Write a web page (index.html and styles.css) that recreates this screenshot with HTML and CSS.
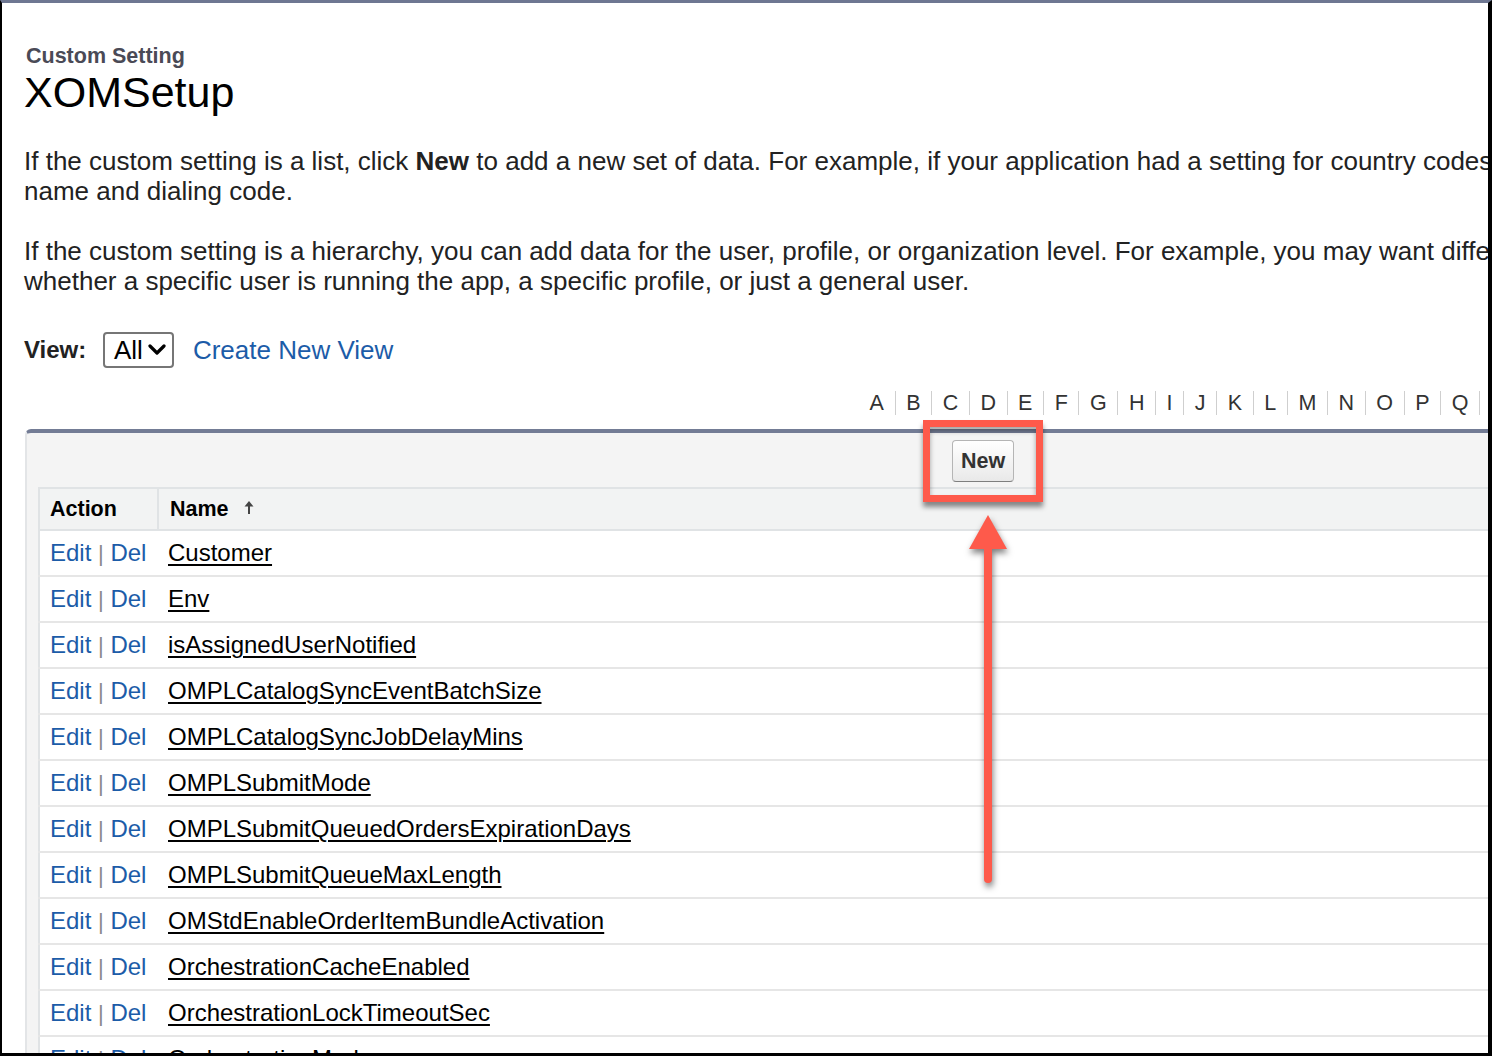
FILE: index.html
```html
<!DOCTYPE html>
<html lang="en">
<head>
    <meta charset="UTF-8">
    <title>XOMSetup ~ Custom Setting</title>
    <link rel="stylesheet" href="styles.css">
</head>
<body>
    <div class="frame">
        <div class="page">
            <div class="page-type">Custom Setting</div>
            <h1 class="page-title">XOMSetup</h1>

            <p class="intro">If the custom setting is a list, click <b>New</b> to add a new set of data. For example, if your application had a setting for country codes, each set might include the country's<br>name and dialing code.</p>
            <p class="intro">If the custom setting is a hierarchy, you can add data for the user, profile, or organization level. For example, you may want different values to display depending on<br>whether a specific user is running the app, a specific profile, or just a general user.</p>

            <div class="view-row">
                <span class="view-label">View:</span>
                <span class="view-select">All
                    <svg width="18" height="12" viewBox="0 0 18 12"><path d="M2 2 L9 9 L16 2" fill="none" stroke="#000" stroke-width="3.2" stroke-linecap="round" stroke-linejoin="round"/></svg>
                </span>
                <a class="link" href="#">Create New View</a>
            </div>

            <div class="alpha">
                <span>A</span><span>B</span><span>C</span><span>D</span><span>E</span><span>F</span><span>G</span><span>H</span><span>I</span><span>J</span><span>K</span><span>L</span><span>M</span><span>N</span><span>O</span><span>P</span><span>Q</span><span>R</span><span>S</span>
            </div>

            <div class="list-block">
                <div class="list-buttons">
                    <button class="btn">New</button>
                </div>
                <table class="list">
                    <tr class="head">
                        <th class="col-action">Action</th>
                        <th>Name <svg class="sort" width="10" height="14" viewBox="0 0 10 14"><path d="M5 13 L5 3" stroke="#444" stroke-width="2"/><path d="M5 0 L9.5 5.5 L0.5 5.5 Z" fill="#444"/></svg></th>
                    </tr>
                    <tr><td class="col-action"><a class="link" href="#">Edit</a> <span class="pipe">|</span> <a class="link" href="#">Del</a></td><td><a class="name" href="#">Customer</a></td></tr>
                    <tr><td class="col-action"><a class="link" href="#">Edit</a> <span class="pipe">|</span> <a class="link" href="#">Del</a></td><td><a class="name" href="#">Env</a></td></tr>
                    <tr><td class="col-action"><a class="link" href="#">Edit</a> <span class="pipe">|</span> <a class="link" href="#">Del</a></td><td><a class="name" href="#">isAssignedUserNotified</a></td></tr>
                    <tr><td class="col-action"><a class="link" href="#">Edit</a> <span class="pipe">|</span> <a class="link" href="#">Del</a></td><td><a class="name" href="#">OMPLCatalogSyncEventBatchSize</a></td></tr>
                    <tr><td class="col-action"><a class="link" href="#">Edit</a> <span class="pipe">|</span> <a class="link" href="#">Del</a></td><td><a class="name" href="#">OMPLCatalogSyncJobDelayMins</a></td></tr>
                    <tr><td class="col-action"><a class="link" href="#">Edit</a> <span class="pipe">|</span> <a class="link" href="#">Del</a></td><td><a class="name" href="#">OMPLSubmitMode</a></td></tr>
                    <tr><td class="col-action"><a class="link" href="#">Edit</a> <span class="pipe">|</span> <a class="link" href="#">Del</a></td><td><a class="name" href="#">OMPLSubmitQueuedOrdersExpirationDays</a></td></tr>
                    <tr><td class="col-action"><a class="link" href="#">Edit</a> <span class="pipe">|</span> <a class="link" href="#">Del</a></td><td><a class="name" href="#">OMPLSubmitQueueMaxLength</a></td></tr>
                    <tr><td class="col-action"><a class="link" href="#">Edit</a> <span class="pipe">|</span> <a class="link" href="#">Del</a></td><td><a class="name" href="#">OMStdEnableOrderItemBundleActivation</a></td></tr>
                    <tr><td class="col-action"><a class="link" href="#">Edit</a> <span class="pipe">|</span> <a class="link" href="#">Del</a></td><td><a class="name" href="#">OrchestrationCacheEnabled</a></td></tr>
                    <tr><td class="col-action"><a class="link" href="#">Edit</a> <span class="pipe">|</span> <a class="link" href="#">Del</a></td><td><a class="name" href="#">OrchestrationLockTimeoutSec</a></td></tr>
                    <tr><td class="col-action"><a class="link" href="#">Edit</a> <span class="pipe">|</span> <a class="link" href="#">Del</a></td><td><a class="name" href="#">OrchestrationMode</a></td></tr>
                </table>
            </div>
        </div>

        <!-- annotation overlay -->
        <div class="callout-box"></div>
        <svg class="callout-arrow" width="60" height="400" viewBox="0 0 60 400">
            <path d="M28 40 L28 374" stroke="#fe5a4b" stroke-width="8" stroke-linecap="round"/>
            <path d="M28 10 L47 44 L9 44 Z" fill="#fe5a4b"/>
        </svg>
    </div>
</body>
</html>
```

FILE: styles.css
```css
body {
    margin: 0;
    font-family: "Liberation Sans", Arial, sans-serif;
    background: #000;
}
.frame {
    position: relative;
    width: 1492px;
    height: 1056px;
    box-sizing: border-box;
    border-top: 3px solid #6e7792;
    border-left: 2px solid #000;
    border-right: 4px solid #000;
    border-bottom: 3px solid #000;
    background: #fff;
    overflow: hidden;
}
.page {
    padding: 41px 0 0 22px;
    white-space: nowrap;
}
.page-type {
    font-size: 21.5px;
    line-height: 24px;
    font-weight: bold;
    color: #4a4a56;
    padding-left: 2px;
}
.page-title {
    margin: 1px 0 0;
    font-size: 43px;
    line-height: 46px;
    font-weight: normal;
    color: #000;
}
.intro {
    margin: 31px 0 0;
    font-size: 26px;
    line-height: 30px;
    color: #222;
}
.intro + .intro {
    margin-top: 30px;
}
.view-row {
    margin-top: 36px;
    height: 36px;
    display: flex;
    align-items: center;
}
.view-label {
    font-size: 24px;
    font-weight: bold;
    color: #222;
    width: 79px;
}
.view-select {
    display: flex;
    align-items: center;
    gap: 5px;
    box-sizing: border-box;
    height: 36px;
    padding: 0 6px 0 9px;
    border: 2px solid #767676;
    border-radius: 4px;
    font-size: 26px;
    color: #000;
    margin-right: 19px;
}
.link {
    color: #1c5ca8;
    text-decoration: none;
    font-size: 26px;
}
.alpha {
    margin: 22px 0 0 835px;
    height: 26px;
    display: flex;
    align-items: center;
}
.alpha span {
    font-size: 21.5px;
    color: #333;
    padding: 0 10.6px;
    border-right: 1px solid #cfcfcf;
    line-height: 24px;
}
.list-block {
    margin: 13px 0 0 1px;
    width: 1600px;
    background: #f4f4f4;
    border-top: 4px solid #737c95;
    border-left: 2px solid #e3e5e7;
    border-radius: 6px 0 0 0;
    padding: 0 0 0 11px;
}
.list-buttons {
    height: 52px;
    padding: 2px 0 0 914px;
    display: flex;
    align-items: center;
}
.btn {
    height: 42px;
    padding: 0 8px;
    font-family: inherit;
    font-size: 21.5px;
    font-weight: bold;
    color: #333;
    background: linear-gradient(#ffffff, #e9e9e9);
    border: 1px solid #b5b5b5;
    border-bottom-color: #7f7f7f;
    border-radius: 4px;
}
.list {
    width: 100%;
    border-collapse: collapse;
    background: #fff;
    border-left: 2px solid #e0e3e5;
    border-top: 2px solid #e0e3e5;
}
.list th {
    height: 40px;
    background: #f2f3f3;
    text-align: left;
    font-size: 21.5px;
    font-weight: bold;
    color: #000;
    padding: 0 0 0 11px;
    border-bottom: 2px solid #e0e3e5;
}
.list th.col-action {
    padding-left: 10px;
    border-right: 2px solid #e0e3e5;
}
.sort {
    margin-left: 9px;
    vertical-align: 1px;
}
.list td {
    height: 44px;
    padding: 0 0 0 10px;
    border-bottom: 2px solid #e6e6e6;
    font-size: 24px;
}
.list td.col-action {
    width: 108px;
    padding-left: 10px;
}
.list td .link {
    font-size: 24px;
}
.pipe {
    color: #8a8a8a;
    font-size: 22px;
}
.name {
    color: #000;
    font-size: 24px;
    text-decoration: underline;
    text-underline-offset: 3px;
    text-decoration-thickness: 2px;
}
.callout-box {
    position: absolute;
    left: 921px;
    top: 417px;
    width: 106px;
    height: 68px;
    border: 7px solid #fe5a4b;
    box-shadow: 0 5px 5px rgba(0, 0, 0, 0.45), inset 0 4px 5px rgba(0, 0, 0, 0.35);
}
.callout-arrow {
    position: absolute;
    left: 958px;
    top: 502px;
    filter: drop-shadow(1px 4px 3px rgba(0, 0, 0, 0.5));
}
```
